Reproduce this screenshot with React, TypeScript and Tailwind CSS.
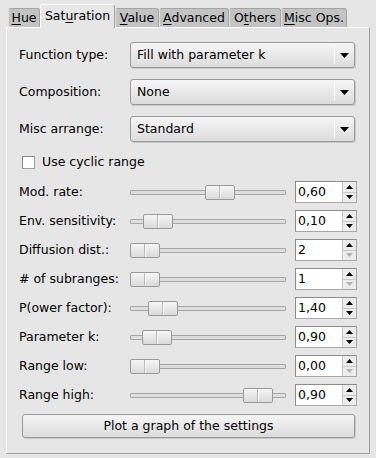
import React from "react";

const tabs = [
  { pre: "", u: "H", post: "ue", w: "w-[32px]" },
  { pre: "Sat", u: "u", post: "ration", w: "w-[75px]", active: true },
  { pre: "", u: "V", post: "alue", w: "w-[44px]" },
  { pre: "", u: "A", post: "dvanced", w: "w-[70px]" },
  { pre: "O", u: "t", post: "hers", w: "w-[52px]" },
  { pre: "", u: "M", post: "isc Ops.", w: "w-[66px]" },
];

const combos = [
  { label: "Function type:", value: "Fill with parameter k" },
  { label: "Composition:", value: "None" },
  { label: "Misc arrange:", value: "Standard" },
];

const sliders = [
  { label: "Mod. rate:", pos: 75, value: "0,60" },
  { label: "Env. sensitivity:", pos: 13, value: "0,10" },
  { label: "Diffusion dist.:", pos: 0, value: "2", downOff: true },
  { label: "# of subranges:", pos: 0, value: "1", downOff: true },
  { label: "P(ower factor):", pos: 18, value: "1,40" },
  { label: "Parameter k:", pos: 12, value: "0,90" },
  { label: "Range low:", pos: 0, value: "0,00", downOff: true },
  { label: "Range high:", pos: 113, value: "0,90" },
];

function Combo({ value }: { value: string }) {
  return (
    <div className="flex items-center w-[225px] h-[26px] rounded-[3px] border border-[#9a9a9a] bg-gradient-to-b from-[#f6f6f6] to-[#dcdcdc] shadow-[1px_1px_0_#c8c8c8]">
      <span className="flex-1 pl-[6px]">{value}</span>
      <div className="w-px h-[18px] bg-[#bdbdbd] border-r border-white" />
      <div className="w-[19px] flex justify-center">
        <svg width="9" height="5" viewBox="0 0 9 5"><path d="M0 0H9L4.5 5Z" fill="#000" /></svg>
      </div>
    </div>
  );
}

function Slider({ pos }: { pos: number }) {
  return (
    <div className="relative w-[156px] h-[15px] flex items-center">
      <div className="w-full h-[5px] bg-[#dedede] border border-[#a6a6a6] rounded-[1px]" />
      <div
        className="absolute top-0 h-[15px] w-[30px] rounded-[2px] border border-[#9a9a9a] bg-gradient-to-b from-[#f6f6f6] to-[#dadada] flex justify-center"
        style={{ left: pos }}
      >
        <div className="w-[2px] h-full border-l border-[#b8b8b8] border-r border-r-white" />
      </div>
    </div>
  );
}

function Spin({ value, downOff }: { value: string; downOff?: boolean }) {
  return (
    <div className="flex w-[62px] h-[22px] border border-[#a8a8a8] border-t-[#8c8c8c] border-l-[#8c8c8c] bg-white">
      <span className="flex-1 pl-[2px] leading-[20px]">{value}</span>
      <div className="w-[14px] flex flex-col border-l border-[#c8c8c8] bg-[#ececec]">
        <div className="flex-1 flex items-center justify-center border-b border-[#c8c8c8]">
          <svg width="7" height="4" viewBox="0 0 7 4"><path d="M0 4H7L3.5 0Z" fill="#000" /></svg>
        </div>
        <div className="flex-1 flex items-center justify-center">
          <svg width="7" height="4" viewBox="0 0 7 4"><path d="M0 0H7L3.5 4Z" fill={downOff ? "#b4b4b4" : "#000"} /></svg>
        </div>
      </div>
    </div>
  );
}

export default function App() {
  return (
    <div className="w-[376px] h-[458px] bg-[#e6e6e6] text-black text-[12.5px] font-['DejaVu_Sans',sans-serif] overflow-hidden">
      {/* tab bar */}
      <div className="flex items-end h-[27px] pl-[8px]">
        {tabs.map((t, i) =>
          t.active ? (
            <div
              key={i}
              className={`${t.w} h-[24px] -mb-px relative z-10 bg-[#e6e6e6] rounded-t-[3px] border-t border-l border-white border-r border-r-[#a0a0a0] flex items-center justify-center`}
            >
              <span>{t.pre}<span className="underline underline-offset-2">{t.u}</span>{t.post}</span>
            </div>
          ) : (
            <div
              key={i}
              className={`${t.w} h-[19px] bg-[#c3c3c3] rounded-t-[3px] border-t border-l border-r border-[#a4a4a4] border-l-[#e0e0e0] flex items-center justify-center`}
            >
              <span>{t.pre}<span className="underline underline-offset-2">{t.u}</span>{t.post}</span>
            </div>
          )
        )}
      </div>

      {/* panel */}
      <div className="ml-[6px] w-[364px] h-[427px] border-t border-l border-white border-r border-b border-r-[#a0a0a0] border-b-[#a0a0a0] pt-[14px] pl-[12px]">
        <div className="flex flex-col gap-[11px]">
          {combos.map((c) => (
            <div key={c.label} className="flex items-center">
              <span className="w-[111px]">{c.label}</span>
              <Combo value={c.value} />
            </div>
          ))}
        </div>

        <div className="flex items-center mt-[14px] ml-[3px] h-[13px]">
          <div className="w-[13px] h-[13px] bg-white border border-[#a0a0a0] border-t-[#8a8a8a] border-l-[#8a8a8a]" />
          <span className="ml-[7px]">Use cyclic range</span>
        </div>

        <div className="flex flex-col gap-[7px] mt-[12px]">
          {sliders.map((s) => (
            <div key={s.label} className="flex items-center h-[22px]">
              <span className="w-[111px]">{s.label}</span>
              <Slider pos={s.pos} />
              <div className="ml-[9px]">
                <Spin value={s.value} downOff={s.downOff} />
              </div>
            </div>
          ))}
        </div>

        <button className="mt-[8px] ml-[3px] w-[333px] h-[24px] rounded-[3px] border border-[#9a9a9a] bg-gradient-to-b from-[#f6f6f6] to-[#dcdcdc] shadow-[1px_1px_0_#c8c8c8]">
          Plot a graph of the settings
        </button>
      </div>
    </div>
  );
}
